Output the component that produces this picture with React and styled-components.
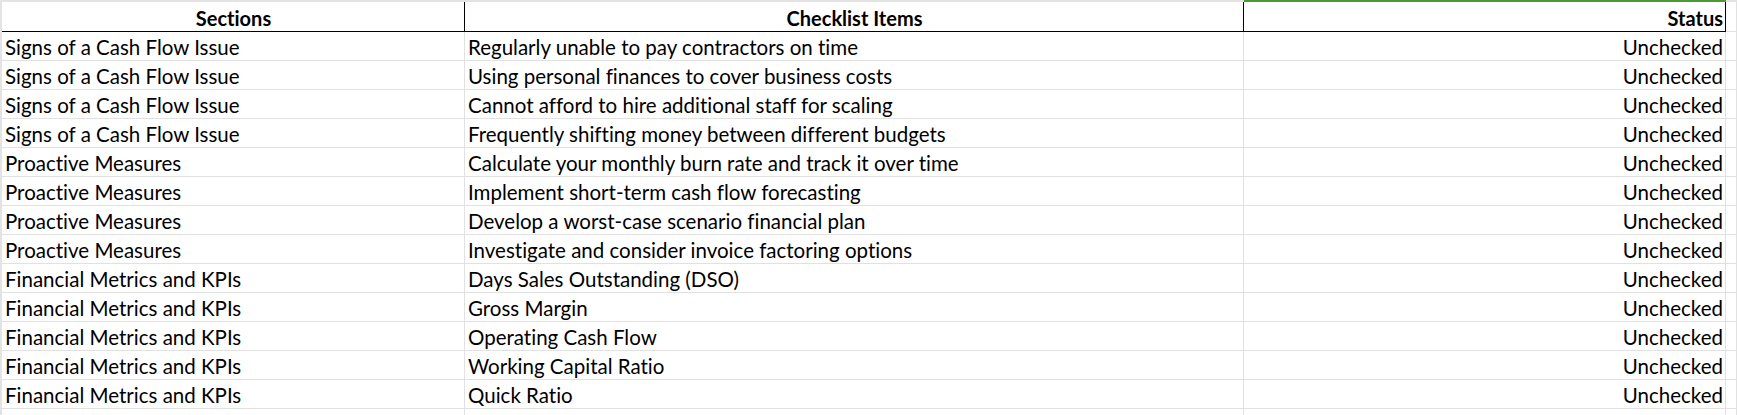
import styled, { createGlobalStyle } from 'styled-components'

const rows = [
	['Signs of a Cash Flow Issue', 'Regularly unable to pay contractors on time'],
	['Signs of a Cash Flow Issue', 'Using personal finances to cover business costs'],
	['Signs of a Cash Flow Issue', 'Cannot afford to hire additional staff for scaling'],
	['Signs of a Cash Flow Issue', 'Frequently shifting money between different budgets'],
	['Proactive Measures', 'Calculate your monthly burn rate and track it over time'],
	['Proactive Measures', 'Implement short-term cash flow forecasting'],
	['Proactive Measures', 'Develop a worst-case scenario financial plan'],
	['Proactive Measures', 'Investigate and consider invoice factoring options'],
	['Financial Metrics and KPIs', 'Days Sales Outstanding (DSO)'],
	['Financial Metrics and KPIs', 'Gross Margin'],
	['Financial Metrics and KPIs', 'Operating Cash Flow'],
	['Financial Metrics and KPIs', 'Working Capital Ratio'],
	['Financial Metrics and KPIs', 'Quick Ratio'],
	['', ''],
]

const App = () => {
	return (
		<>
			<GlobalStyle />
			<Sheet>
				<HeaderRow>
					<ColStrip />
					<ColStrip />
					<ColStrip $active />
					<ColStrip />
					<HeadCell $align="center">Sections</HeadCell>
					<HeadCell $align="center">Checklist Items</HeadCell>
					<HeadCell $align="right">Status</HeadCell>
					<HeadCell $blank />
				</HeaderRow>

				{rows.map(([section, item], i) => (
					<Row key={i}>
						<Cell>{section}</Cell>
						<Cell>{item}</Cell>
						<Cell $align="right">{section ? 'Unchecked' : ''}</Cell>
						<Cell />
					</Row>
				))}
			</Sheet>
		</>
	)
}

export default App

const GlobalStyle = createGlobalStyle`
	html, body {
		margin: 0;
		padding: 0;
		background: #fff;
		overflow: hidden;
	}
`

const columns = `463px 779px 482px 1fr`

const Sheet = styled.div`
	display: flex;
	flex-direction: column;
	border-left: 2px solid #e3e3e3;
	width: 1735px;
	height: 415px;
	overflow: hidden;
	font-family: Lato, 'Open Sans', sans-serif;
	font-variant-ligatures: none;
	color: #000;
`

const HeaderRow = styled.div`
	display: grid;
	grid-template-columns: ${columns};
	grid-template-rows: 2px 30px;
`

const Row = styled.div`
	display: grid;
	grid-template-columns: ${columns};
	height: 29px;
	flex-shrink: 0;
`

const ColStrip = styled.div`
	background: ${({ $active }) => ($active ? '#4b9b32' : '#e3e3e3')};
`

const Cell = styled.div`
	box-sizing: border-box;
	padding: 0 2px 0 3px;
	display: flex;
	align-items: flex-end;
	justify-content: ${({ $align }) =>
		$align === 'center' ? 'center' : $align === 'right' ? 'flex-end' : 'flex-start'};
	font-size: 20.5px;
	line-height: 25px;
	white-space: nowrap;
	overflow: hidden;
	border-right: 1px solid #e1e1e1;
	border-bottom: 1px solid #e1e1e1;
`

const HeadCell = styled(Cell)`
	font-size: 20px;
	font-weight: 700;
	border-color: ${({ $blank }) => ($blank ? '#e1e1e1' : '#000')};
`
